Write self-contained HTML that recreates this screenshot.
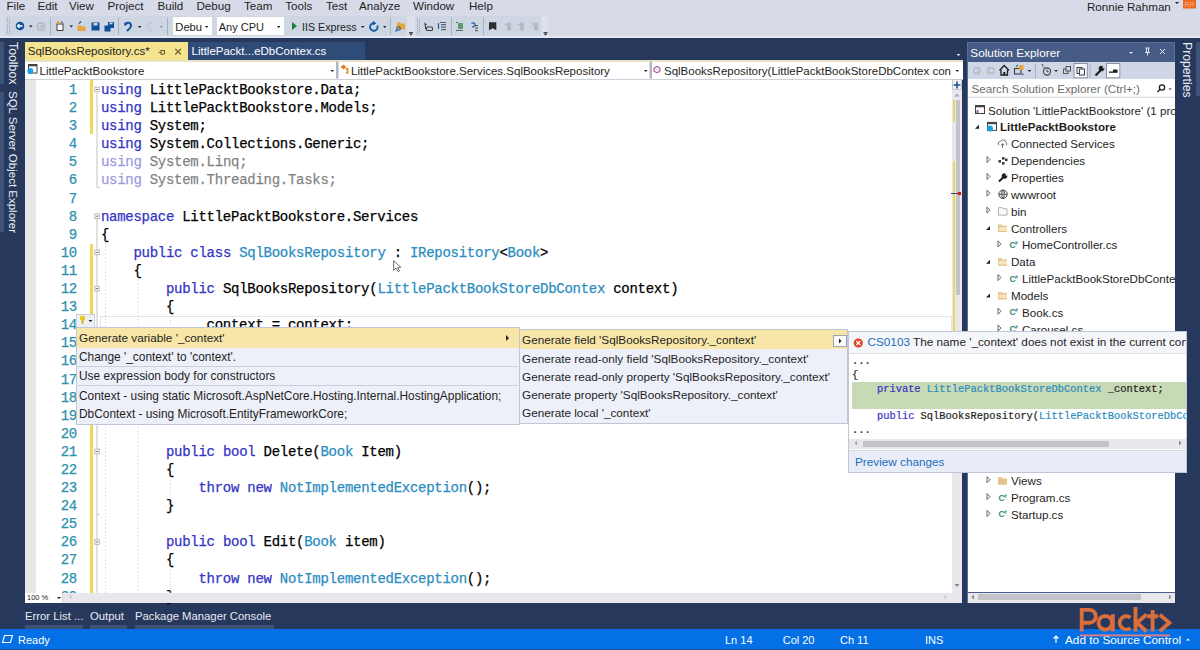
<!DOCTYPE html>
<html><head><meta charset="utf-8">
<style>
*{margin:0;padding:0;box-sizing:border-box}
html,body{width:1200px;height:650px;overflow:hidden}
body{position:relative;background:#26385c;font-family:"Liberation Sans",sans-serif;font-size:11.5px;color:#1e1e1e}
.a{position:absolute}
.t{position:absolute;white-space:pre;line-height:1}
#menubar{left:0;top:0;width:1200px;height:37.7px;background:#d6dbe7}
#toolbar{left:0;top:36.2px;width:1200px;height:1.5px;background:#e4e7ef}
.mi{position:absolute;top:-1px;font-size:11.6px;color:#1e1e1e;line-height:14px}
.code{position:absolute;left:100.9px;top:81px;font-family:"Liberation Mono",monospace;font-size:14px;letter-spacing:-0.27px;line-height:18.1px;white-space:pre;color:#000}
.ln{position:absolute;left:50px;width:27px;top:81px;font-family:"Liberation Mono",monospace;font-size:14px;letter-spacing:-0.22px;line-height:18.1px;white-space:pre;color:#2b91af;text-align:right}
.code,.ln{-webkit-text-stroke:0.25px currentColor}
.k{color:#3434c4}
.ty{color:#2a8cc0}
.g{opacity:.5}
</style></head><body>
<div id="menubar" class="a"></div>
<div id="toolbar" class="a"></div>

<!-- toolbars -->
<div class="a" style="left:5px;top:15.6px;width:402px;height:20.6px;background:#ced5e3"></div>
<div class="a" style="left:407px;top:15.6px;width:8px;height:20.6px;background:#dde1eb"></div>
<div class="a" style="left:415px;top:15.6px;width:126px;height:20.6px;background:#ced5e3"></div>
<div class="a" style="left:541px;top:15.6px;width:7px;height:20.6px;background:#dde1eb"></div>
<svg class="a" style="left:0;top:0" width="560" height="38" viewBox="0 0 560 38">
 <g fill="#9aa3b5">
  <rect x="7" y="18" width="1" height="1"/><rect x="9" y="19" width="1" height="1"/><rect x="7" y="20" width="1" height="1"/><rect x="9" y="21" width="1" height="1"/><rect x="7" y="22" width="1" height="1"/><rect x="9" y="23" width="1" height="1"/><rect x="7" y="24" width="1" height="1"/><rect x="9" y="25" width="1" height="1"/><rect x="7" y="26" width="1" height="1"/><rect x="9" y="27" width="1" height="1"/><rect x="7" y="28" width="1" height="1"/><rect x="9" y="29" width="1" height="1"/><rect x="7" y="30" width="1" height="1"/><rect x="9" y="31" width="1" height="1"/><rect x="7" y="32" width="1" height="1"/><rect x="9" y="33" width="1" height="1"/>
  <rect x="417" y="18" width="1" height="1"/><rect x="419" y="19" width="1" height="1"/><rect x="417" y="20" width="1" height="1"/><rect x="419" y="21" width="1" height="1"/><rect x="417" y="22" width="1" height="1"/><rect x="419" y="23" width="1" height="1"/><rect x="417" y="24" width="1" height="1"/><rect x="419" y="25" width="1" height="1"/><rect x="417" y="26" width="1" height="1"/><rect x="419" y="27" width="1" height="1"/><rect x="417" y="28" width="1" height="1"/><rect x="419" y="29" width="1" height="1"/><rect x="417" y="30" width="1" height="1"/><rect x="419" y="31" width="1" height="1"/><rect x="417" y="32" width="1" height="1"/><rect x="419" y="33" width="1" height="1"/>
 </g>
 <!-- separators -->
 <g fill="#a9b0c0">
  <rect x="50" y="17.5" width="1" height="17.5"/><rect x="118" y="17.5" width="1" height="17.5"/><rect x="167" y="17.5" width="1" height="17.5"/><rect x="390" y="17.5" width="1" height="17.5"/><rect x="451" y="17.5" width="1" height="17.5"/><rect x="483" y="17.5" width="1" height="17.5"/>
 </g>
 <!-- back/forward -->
 <circle cx="20" cy="26" r="4.3" fill="#0e4f9a"/><path d="M17.5 26h5M19.5 24l-2 2 2 2" stroke="#fff" stroke-width="1.3" fill="none"/>
 <circle cx="41" cy="26.5" r="3.7" fill="none" stroke="#b3b9c4" stroke-width="1.7"/><path d="M39 26.5h3.5M41 24.8l1.7 1.7-1.7 1.7" stroke="#b3b9c4" stroke-width="1.1" fill="none"/>
 <g fill="#1e1e1e"><path d="M29 25.5h3.5l-1.75 2z"/><path d="M69.5 25.5h3.5l-1.75 2z"/><path d="M138 26h3.5l-1.75 2z"/><path d="M361 26h3.5l-1.75 2z"/><path d="M383 26h3.5l-1.75 2z"/></g>
 <g fill="#8f97a6"><path d="M159.5 26h3.5l-1.75 2z"/></g>
 <!-- new project -->
 <rect x="57" y="24" width="6" height="6.5" fill="#f6f6f6" stroke="#424242" stroke-width="1"/><circle cx="58" cy="22.5" r="1.6" fill="#e8a33b"/><path d="M61 21.5l2 1.5" stroke="#424242"/>
 <!-- open -->
 <path d="M77.5 25.5h3l1 1h4v4.5h-8z" fill="#e8a33b"/><path d="M79 23.5l2-2" stroke="#1e5fa8" stroke-width="1.5"/>
 <!-- save -->
 <path d="M91.5 22.5h8v8h-8z" fill="#0e4f9a"/><rect x="93.5" y="23" width="4" height="2.5" fill="#d1d7e5"/>
 <path d="M104.5 25.5h6v6h-6z" fill="#0e4f9a"/><path d="M108 22h6v6h-6z" fill="#0e4f9a"/><rect x="109.5" y="22.5" width="3" height="1.8" fill="#d1d7e5"/>
 <!-- undo redo -->
 <path d="M125.5 23.5c2-1.5 5-1 5.5 1.5 0.5 2.5-2.5 4.5-4 6" stroke="#0e4f9a" stroke-width="2" fill="none"/><path d="M124 22.5l0.5 3.5 3-1.5z" fill="#0e4f9a"/>
 <path d="M153 23.5c-2-1.5-5-1-5.5 1.5-0.5 2.5 2.5 4.5 4 6" stroke="#bfc4cf" stroke-width="1.4" fill="none"/>
 <!-- play -->
 <path d="M292 22l5 4-5 4z" fill="#1a7f37"/>
 <!-- refresh -->
 <path d="M377.3 25.5A3.8 3.8 0 1 1 373.3 23.2" stroke="#0e5aa8" stroke-width="1.8" fill="none"/><path d="M372.8 20.8l3.6 2.4-3.6 2.4z" fill="#0e5aa8"/>
 <!-- find in files -->
 <path d="M397 22.5h3l1 1h4v6h-8z" fill="#e8a33b"/><circle cx="398.5" cy="28.5" r="1.8" fill="none" stroke="#1e5fa8" stroke-width="1.1"/><path d="M397 30l-1.5 1.5" stroke="#1e5fa8" stroke-width="1.2"/>
 <!-- overflow carets -->
 <g fill="#1e1e1e"><rect x="409" y="32" width="4" height="0.8"/><path d="M409 33.5h4l-2 2z"/><rect x="543.5" y="32" width="4" height="0.8"/><path d="M543.5 33.5h4l-2 2z"/></g>
 <!-- debug icons -->
 <path d="M424.5 22l2.5 2.5-2.5 1.5z" fill="#1e5fa8"/><rect x="426.5" y="27" width="6" height="3.5" rx="1" fill="none" stroke="#424242" stroke-width="1.1"/><path d="M425.5 24.5v4.5h1" stroke="#424242" fill="none"/>
 <g fill="#5a5f6a"><rect x="440" y="22" width="6" height="1"/><rect x="441" y="24" width="5" height="1.2"/><rect x="441" y="26.5" width="5" height="1.2"/><rect x="441" y="29" width="5" height="1.2"/></g><path d="M438.5 23v6" stroke="#1e5fa8" stroke-width="1.2"/>
 <rect x="458" y="23" width="5" height="6" fill="#5aa06a"/><g fill="#5a5f6a"><rect x="456" y="30" width="7" height="1"/><rect x="456" y="22" width="2" height="1"/></g>
 <path d="M471.5 23.5c1-1 3.5-1 3.5 1s-2 1.5-2.5 3" stroke="#1e5fa8" stroke-width="1.4" fill="none"/><g fill="#5a5f6a"><rect x="475" y="25" width="3" height="1.2"/><rect x="475" y="27.5" width="3" height="1.2"/><rect x="475" y="30" width="3" height="1.2"/></g>
 <!-- bookmark -->
 <path d="M489 22.3h7.3v8l-3.65-2-3.65 2z" fill="#2d2d30"/>
 <g fill="#b3b9c5"><path d="M504 24.5l2-1.5v3z"/><rect x="505" y="24" width="2" height="1"/><rect x="507" y="22.5" width="4" height="8"/>
 <path d="M517 24.5l2-1.5v3z"/><rect x="518" y="24" width="2" height="1"/><rect x="520" y="22.5" width="4" height="8"/>
 <path d="M531 22.5l2.5 2.5-2.5 2.5" stroke="#b3b9c5" fill="none"/><rect x="534" y="22.5" width="4" height="8"/></g>
</svg>
<!-- combos -->
<div class="a" style="left:172.7px;top:17.3px;width:39.3px;height:18px;background:#fff"></div>
<div class="a" style="left:216.7px;top:17.3px;width:67.6px;height:18px;background:#fff"></div>
<div class="t" style="left:175.3px;top:21px;font-size:11.2px;line-height:12px">Debu</div>
<div class="t" style="left:218.7px;top:21px;font-size:11px;line-height:12px">Any CPU</div>
<div class="t" style="left:302px;top:21px;font-size:10.7px;line-height:12px">IIS Express</div>
<svg class="a" style="left:0;top:0" width="300" height="38"><g fill="#1e1e1e"><path d="M205 26h3.5l-1.75 2z"/><path d="M277 26h3.5l-1.75 2z"/></g></svg>
<!-- user -->
<div class="t" style="left:1087px;top:1px;font-size:11.6px;line-height:12px">Ronnie Rahman</div>
<svg class="a" style="left:1170px;top:0" width="30" height="12"><path d="M5 2h4l-2 2z" fill="#1e1e1e"/><rect x="13" y="0" width="13" height="8.5" fill="#f0641e"/><text x="14.5" y="7" font-size="7" fill="#fbb58e" font-family="Liberation Sans">RR</text></svg>

<div class="mi" style="left:6.5px">File</div>
<div class="mi" style="left:37.5px">Edit</div>
<div class="mi" style="left:69px">View</div>
<div class="mi" style="left:107.5px">Project</div>
<div class="mi" style="left:157.5px">Build</div>
<div class="mi" style="left:196.5px">Debug</div>
<div class="mi" style="left:244px">Team</div>
<div class="mi" style="left:285.3px">Tools</div>
<div class="mi" style="left:326px">Test</div>
<div class="mi" style="left:359px">Analyze</div>
<div class="mi" style="left:413px">Window</div>
<div class="mi" style="left:469px">Help</div>

<!-- editor -->
<div class="a" style="left:25px;top:42px;width:163px;height:18.5px;background:#f4e38f"></div>
<div class="a" style="left:188px;top:42px;width:177px;height:18.5px;background:#2f4c79"></div>
<div class="a" style="left:25px;top:60.3px;width:938px;height:1.4px;background:#e9e4c8"></div>
<div class="a" style="left:25px;top:61.7px;width:938px;height:17px;background:#fff"></div>
<div class="a" style="left:25px;top:78.7px;width:938px;height:1.3px;background:#cdd1db"></div>
<div class="a" style="left:25px;top:80px;width:937px;height:512.5px;background:#fff"></div>
<div class="a" style="left:25px;top:80px;width:11px;height:512.5px;background:#e6e7e8"></div>

<div class="ln">1
2
3
4
5
6
7
8
9
10
11
12
13
14
15
16
17
18
19
20
21
22
23
24
25
26
27
28
29</div>
<div class="code"><span class="k">using</span> LittlePacktBookstore.Data;
<span class="k">using</span> LittlePacktBookstore.Models;
<span class="k">using</span> System;
<span class="k">using</span> System.Collections.Generic;
<span class="g"><span class="k">using</span> System.Linq;</span>
<span class="g"><span class="k">using</span> System.Threading.Tasks;</span>

<span class="k">namespace</span> LittlePacktBookstore.Services
{
    <span class="k">public</span> <span class="k">class</span> <span class="ty">SqlBooksRepository</span> : <span class="ty">IRepository</span>&lt;<span class="ty">Book</span>&gt;
    {
        <span class="k">public</span> SqlBooksRepository(<span class="ty">LittlePacktBookStoreDbContex</span> context)
        {
            _context = context;






        <span class="k">public</span> <span class="k">bool</span> Delete(<span class="ty">Book</span> Item)
        {
            <span class="k">throw</span> <span class="k">new</span> <span class="ty">NotImplementedException</span>();
        }

        <span class="k">public</span> <span class="k">bool</span> Edit(<span class="ty">Book</span> item)
        {
            <span class="k">throw</span> <span class="k">new</span> <span class="ty">NotImplementedException</span>();
        }</div>



<!-- editor decorations -->
<div class="a" style="left:90px;top:80px;width:2.8px;height:54px;background:#eed75b"></div>
<div class="a" style="left:90px;top:243.5px;width:2.8px;height:349px;background:#eed75b"></div>
<svg class="a" style="left:90px;top:80px" width="90" height="513">
 <g fill="none" stroke="#c4c4c4" stroke-width="1">
  <path d="M97 12.3v95.2h3" transform="translate(-90,0)"/>
  <path d="M97 138.8v374M97 434.5h2.5" transform="translate(-90,0)"/>
 </g>
 <g transform="translate(-90,0)">
  <rect x="94.7" y="87.2" width="4.6" height="4.6" fill="#fff" stroke="#b8b8b8" transform="translate(0,-80)"/><rect x="95.8" y="89" width="2.4" height="1" fill="#6b6b6b" transform="translate(0,-80)"/>
  <rect x="94.7" y="87.2" width="4.6" height="4.6" fill="#fff" stroke="#b8b8b8" transform="translate(0,46.7)"/><rect x="95.8" y="89" width="2.4" height="1" fill="#6b6b6b" transform="translate(0,46.7)"/>
  <rect x="94.7" y="87.2" width="4.6" height="4.6" fill="#fff" stroke="#b8b8b8" transform="translate(0,82.9)"/><rect x="95.8" y="89" width="2.4" height="1" fill="#6b6b6b" transform="translate(0,82.9)"/>
  <rect x="94.7" y="87.2" width="4.6" height="4.6" fill="#fff" stroke="#b8b8b8" transform="translate(0,119.1)"/><rect x="95.8" y="89" width="2.4" height="1" fill="#6b6b6b" transform="translate(0,119.1)"/>
  <rect x="94.7" y="87.2" width="4.6" height="4.6" fill="#fff" stroke="#b8b8b8" transform="translate(0,282)"/><rect x="95.8" y="89" width="2.4" height="1" fill="#6b6b6b" transform="translate(0,282)"/>
  <rect x="94.7" y="87.2" width="4.6" height="4.6" fill="#fff" stroke="#b8b8b8" transform="translate(0,372.5)"/><rect x="95.8" y="89" width="2.4" height="1" fill="#6b6b6b" transform="translate(0,372.5)"/>
 </g>
 <g stroke="#c8c8c8" stroke-width="1" stroke-dasharray="1 2.6" fill="none">
  <path d="M15.5 163v350"/>
  <path d="M48 199.5v313"/>
  <path d="M80.5 236.5v100"/><path d="M80.5 400v17.5"/><path d="M80.5 490v23"/>
 </g>
</svg>
<svg class="a" style="left:0;top:0" width="420" height="280"><path d="M393.7 260.7V270.3L396 268.1L398 271.6L399.5 270.9L397.6 267.5L400.8 267.3Z" fill="#fff" stroke="#5a5a5a" stroke-width="0.9"/></svg>
<!-- current line box -->
<div class="a" style="left:100px;top:315.5px;width:852px;height:18px;border:1px solid #e3e3e3;border-bottom:none"></div>
<!-- lightbulb -->
<div class="a" style="left:76.3px;top:313.7px;width:18.7px;height:13.5px;background:#eef0f6;border:1px solid #c9cfdc;border-bottom:none"></div>
<svg class="a" style="left:76px;top:313px" width="20" height="15"><circle cx="6.5" cy="5" r="2.6" fill="#f0c419"/><rect x="5.6" y="7" width="1.8" height="4" fill="#e3b100"/><path d="M12.5 7h4l-2 2z" fill="#1e1e1e"/></svg>
<!-- vertical scrollbar -->
<div class="a" style="left:952px;top:80px;width:10px;height:512.5px;background:#e8e8ec"></div>
<div class="a" style="left:952px;top:79.4px;width:10px;height:10.6px;background:#f2f2f5;border:1px solid #c6c9d2"></div>
<svg class="a" style="left:952px;top:79px" width="11" height="520"><path d="M5 2.5v7M1.5 6h7" stroke="#1e4f8e" stroke-width="1.6"/><path d="M2.5 17.5h5l-2.5-3z" fill="#9ea3ad"/><path d="M2.5 505h5l-2.5 3z" fill="#86898f"/></svg>
<div class="a" style="left:955.5px;top:99.8px;width:4.8px;height:195px;background:#c2c3c9"></div>
<div class="a" style="left:952.6px;top:99.8px;width:2.8px;height:22.6px;background:#eed75b"></div>
<div class="a" style="left:952.6px;top:161.2px;width:2.8px;height:300px;background:#eed75b"></div>
<div class="a" style="left:951px;top:193px;width:7px;height:1.2px;background:#2a3fa0"></div>
<div class="a" style="left:957.5px;top:191.8px;width:3.5px;height:3.5px;background:#e51400"></div>
<!-- nav bar arrows and icons -->
<svg class="a" style="left:0;top:0" width="965" height="80">
 <g fill="#1e1e1e"><path d="M330.5 70h3.5l-1.75 2z"/><path d="M644 70h3.5l-1.75 2z"/><path d="M955.5 70h3.5l-1.75 2z"/></g>
 <g fill="#b0b8c8"><rect x="336" y="61.5" width="2.5" height="17"/><rect x="649.5" y="61.5" width="2.5" height="17"/></g>
 <rect x="28.5" y="64.5" width="8.5" height="8.5" fill="#fff" stroke="#424242" stroke-width="1"/><rect x="28.5" y="64.5" width="8.5" height="1.8" fill="#424242"/><circle cx="30.3" cy="71" r="3" fill="#1ba1e2"/>
 <g fill="#e0861a"><path d="M343.5 64.5l3 2.5-3 2.5-3-2.5z"/><rect x="346" y="68" width="2.2" height="2.2"/><rect x="346" y="71.5" width="2.2" height="2.2"/><rect x="347.5" y="69.5" width="1" height="3"/></g>
 <path d="M657 66.3l3 1.6v3.4l-3 1.6-3-1.6v-3.4z" fill="#f3e6f3" stroke="#a24a9b" stroke-width="1"/>
</svg>


<!-- dropdown caret in tab well -->
<svg class="a" style="left:952px;top:50px" width="12" height="10"><path d="M4.5 4h4l-2 2z" fill="#e6e9f0"/></svg>
<!-- bottom tool tabs -->
<div class="t" style="left:25px;top:610px;font-size:11.3px;line-height:12px;color:#e6e9f0">Error List ...</div>
<div class="t" style="left:90px;top:610px;font-size:11.3px;line-height:12px;color:#e6e9f0">Output</div>
<div class="t" style="left:135px;top:610px;font-size:11.3px;line-height:12px;color:#e6e9f0">Package Manager Console</div>
<div class="a" style="left:25px;top:625px;width:57.5px;height:3.5px;background:#3d5277"></div>
<div class="a" style="left:90px;top:625px;width:37px;height:3.5px;background:#3d5277"></div>
<div class="a" style="left:135px;top:625px;width:139px;height:3.5px;background:#3d5277"></div>

<!-- left vertical tabs -->
<div class="a" style="left:0;top:42px;width:4px;height:42px;background:#3d5277"></div>
<div class="a" style="left:0;top:92px;width:4px;height:140px;background:#3d5277"></div>
<div class="t" style="left:7px;top:42px;transform-origin:0 0;transform:translate(11px,0) rotate(90deg);color:#e8ecf4;font-size:12.3px;line-height:11px">Toolbox</div>
<div class="t" style="left:7px;top:91px;transform-origin:0 0;transform:translate(11px,0) rotate(90deg);color:#e8ecf4;font-size:11.5px;line-height:11px">SQL Server Object Explorer</div>
<!-- right vertical tab -->
<div class="a" style="left:1196px;top:42px;width:4px;height:54px;background:#3d5277"></div>
<div class="t" style="left:1181px;top:42px;transform-origin:0 0;transform:translate(11px,0) rotate(90deg);color:#e8ecf4;font-size:12.2px;line-height:11px">Properties</div>

<!-- tabs text -->
<div class="t" style="left:27.8px;top:45px;font-size:11.5px;line-height:12px;color:#1e1e1e">SqlBooksRepository.cs*</div>
<div class="t" style="left:191.5px;top:45px;font-size:11.5px;line-height:12px;color:#fff">LittlePackt...eDbContex.cs</div>
<svg class="a" style="left:0;top:0" width="200" height="62"><path d="M175.3 48.8l5.6 5.6M180.9 48.8l-5.6 5.6" stroke="#5e5427" stroke-width="1.15"/><path d="M158.5 52.3h2.5M161 50v4.6M161 50.5h3.5v3.6h-3.5" stroke="#5e5427" stroke-width="1" fill="none"/></svg>
<!-- nav bar -->
<div class="t" style="left:39.5px;top:65px;font-size:11.5px;line-height:12px">LittlePacktBookstore</div>
<div class="t" style="left:351px;top:65px;font-size:11.5px;line-height:12px">LittlePacktBookstore.Services.SqlBooksRepository</div>
<div class="t" style="left:664px;top:65px;font-size:11.5px;line-height:12px">SqlBooksRepository(LittlePacktBookStoreDbContex con</div>


<!-- Solution Explorer -->
<div class="a" style="left:966.6px;top:42.3px;width:208.6px;height:560.7px;background:#465b85;border:1.2px solid #5a6d94"></div>
<div class="t" style="left:970.3px;top:47px;font-size:11.8px;line-height:12px;color:#fff">Solution Explorer</div>
<svg class="a" style="left:1120px;top:42px" width="55" height="20"><path d="M9 10h4l-2 2z" fill="#e6e9f0"/><g stroke="#e6e9f0" stroke-width="1" fill="none"><path d="M26.5 6v4.5M28.5 6v4.5M25 10.5h5M27.5 10.5v3M25.5 6h4"/><path d="M40 7l5 5M45 7l-5 5"/></g></svg>
<div class="a" style="left:968px;top:61.6px;width:207px;height:17.7px;background:#cfd6e5"></div>
<div class="a" style="left:968px;top:79.3px;width:207px;height:18.4px;background:#fff"></div>
<div class="t" style="left:971.4px;top:83px;font-size:11.7px;line-height:12px;color:#6d6d6d">Search Solution Explorer (Ctrl+;)</div>
<svg class="a" style="left:0;top:0" width="1200" height="100">
 <circle cx="977" cy="70.7" r="3.9" fill="#b9bfca"/><path d="M975 70.7h4M976.5 69l-1.7 1.7 1.7 1.7" stroke="#e4e8ef" stroke-width="1" fill="none"/>
 <circle cx="990.7" cy="70.7" r="3.9" fill="#b9bfca"/><path d="M988.7 70.7h4M991 69l1.7 1.7-1.7 1.7" stroke="#e4e8ef" stroke-width="1" fill="none"/>
 <path d="M999.5 70.5l4.75-5 4.75 5" stroke="#1e1e1e" stroke-width="1.3" fill="none"/><path d="M1001 70v5h6.5v-5" stroke="#1e1e1e" stroke-width="1.3" fill="none"/><rect x="1003.3" y="72" width="2" height="3" fill="#1e1e1e"/>
 <rect x="1014.5" y="68.5" width="6.5" height="5.5" fill="none" stroke="#424242" stroke-width="1.1"/><rect x="1019" y="65" width="4.5" height="5" fill="#e8a33b"/><path d="M1016 66.5l2-1.5M1022 75l1.5-1.5" stroke="#1e6fbd" stroke-width="1.2"/>
 <path d="M1027.7 70h3.5l-1.75 2z" fill="#1e1e1e"/>
 <rect x="1035" y="64" width="1" height="14" fill="#a9b0c0"/>
 <path d="M1041.5 64.5l2 0 -1 1.5z" fill="#1e1e1e"/><circle cx="1047" cy="71.5" r="3.6" fill="none" stroke="#424242" stroke-width="1.1"/><path d="M1047 69.5v2.3h1.8M1043 66.5l1.5 1.5" stroke="#424242" stroke-width="1" fill="none"/>
 <path d="M1054.3 70h3.5l-1.75 2z" fill="#1e1e1e"/>
 <rect x="1063.5" y="69" width="4.5" height="4.5" fill="#cfd6e5" stroke="#555" stroke-width="1"/><rect x="1066" y="66.5" width="4.5" height="4.5" fill="#cfd6e5" stroke="#555" stroke-width="1"/>
 <rect x="1074" y="63.5" width="13.3" height="14.3" fill="#f5f7fb" stroke="#8a93a5" stroke-width="1"/><rect x="1077" y="67.5" width="5" height="6" fill="none" stroke="#424242" stroke-width="1"/><rect x="1079.5" y="69" width="5" height="6" fill="#f5f7fb" stroke="#424242" stroke-width="1"/>
 <rect x="1089.5" y="64" width="1" height="14" fill="#a9b0c0"/>
 <path d="M1095.5 75.5l5-5" stroke="#1e1e1e" stroke-width="2.2"/><circle cx="1101.5" cy="68.5" r="2.8" fill="#1e1e1e"/><path d="M1102 65l3 3-2 0.5z" fill="#cfd6e5"/>
 <rect x="1106.5" y="63.5" width="13.3" height="14.3" fill="#fff" stroke="#8a93a5" stroke-width="1"/><rect x="1109" y="71.5" width="8.5" height="1.3" fill="#1e1e1e"/><rect x="1113" y="69.5" width="4.5" height="2.5" fill="#1e1e1e"/>
 <circle cx="1162" cy="87.5" r="2.6" fill="none" stroke="#1e1e1e" stroke-width="1.3"/><path d="M1160 89.5l-2.5 2.5" stroke="#1e1e1e" stroke-width="1.5"/><path d="M1168.5 88.5h3l-1.5 1.5z" fill="#1e1e1e"/><rect x="968" y="96.7" width="207" height="1" fill="#cfd3dd"/>
</svg>
<div class="a" style="left:968px;top:97.7px;width:207px;height:494.3px;background:#fff"></div>
<div class="a" style="left:968px;top:592.5px;width:207px;height:10.5px;background:#e8e8ec"></div>
<div class="a" style="left:977.5px;top:594px;width:163.5px;height:6px;background:#c2c3c9"></div>
<svg class="a" style="left:968px;top:590px" width="207" height="14"><path d="M6 4.5v5l-2.5-2.5z" fill="#86898f"/><path d="M201 4.5v5l2.5-2.5z" fill="#86898f"/></svg>
<div class="a" style="left:970px;top:97.7px;width:205px;height:494px;overflow:hidden"><div class="a" style="left:-970px;top:-97.7px;width:1200px;height:650px"><div class="t" style="left:988px;top:102.60px;font-size:11.6px;line-height:16.85px;color:#1e1e1e">Solution 'LittlePacktBookstore' (1 project)</div>
<div class="t" style="left:1000px;top:119.45px;font-size:11.6px;line-height:16.85px;font-weight:bold;color:#1e1e1e">LittlePacktBookstore</div>
<div class="t" style="left:1011px;top:136.30px;font-size:11.6px;line-height:16.85px;color:#1e1e1e">Connected Services</div>
<div class="t" style="left:1011px;top:153.15px;font-size:11.6px;line-height:16.85px;color:#1e1e1e">Dependencies</div>
<div class="t" style="left:1011px;top:170.00px;font-size:11.6px;line-height:16.85px;color:#1e1e1e">Properties</div>
<div class="t" style="left:1011px;top:186.85px;font-size:11.6px;line-height:16.85px;color:#1e1e1e">wwwroot</div>
<div class="t" style="left:1011px;top:203.70px;font-size:11.6px;line-height:16.85px;color:#1e1e1e">bin</div>
<div class="t" style="left:1011px;top:220.55px;font-size:11.6px;line-height:16.85px;color:#1e1e1e">Controllers</div>
<div class="t" style="left:1022px;top:237.40px;font-size:11.6px;line-height:16.85px;color:#1e1e1e">HomeController.cs</div>
<div class="t" style="left:1011px;top:254.25px;font-size:11.6px;line-height:16.85px;color:#1e1e1e">Data</div>
<div class="t" style="left:1022px;top:271.10px;font-size:11.6px;line-height:16.85px;color:#1e1e1e">LittlePacktBookStoreDbContext.cs</div>
<div class="t" style="left:1011px;top:287.95px;font-size:11.6px;line-height:16.85px;color:#1e1e1e">Models</div>
<div class="t" style="left:1022px;top:304.80px;font-size:11.6px;line-height:16.85px;color:#1e1e1e">Book.cs</div>
<div class="t" style="left:1022px;top:321.65px;font-size:11.6px;line-height:16.85px;color:#1e1e1e">Carousel.cs</div>
<div class="t" style="left:1022px;top:338.50px;font-size:11.6px;line-height:16.85px;color:#1e1e1e">IRepository.cs</div>
<div class="t" style="left:1011px;top:473.30px;font-size:11.6px;line-height:16.85px;color:#1e1e1e">Views</div>
<div class="t" style="left:1011px;top:490.15px;font-size:11.6px;line-height:16.85px;color:#1e1e1e">Program.cs</div>
<div class="t" style="left:1011px;top:507.00px;font-size:11.6px;line-height:16.85px;color:#1e1e1e">Startup.cs</div><svg class="a" style="left:0;top:0" width="1200" height="650" overflow="visible"><rect x="975.5" y="105.52" width="9" height="8" fill="#fff" stroke="#424242"/><rect x="975.5" y="105.52" width="9" height="1.8" fill="#424242"/><path d="M976.5 110.52l2 2M978.5 110.52l-2 2" stroke="#9b4f96" stroke-width="1.2"/><path d="M979.0 124.87v4h-4z" fill="#1e1e1e"/><rect x="987.5" y="122.37" width="9" height="8" fill="#fff" stroke="#424242"/><rect x="987.5" y="122.37" width="9" height="1.8" fill="#424242"/><circle cx="990" cy="128.38" r="3" fill="#1ba1e2"/><path d="M999 145.23a2.2 2.2 0 0 1 1.5-3.8a3 3 0 0 1 5.5 0.8a1.8 1.8 0 0 1 0 3" fill="none" stroke="#6a6a6a" stroke-width="1"/><path d="M1002.5 147.73v-4M1001 145.23l1.5-1.5 1.5 1.5" stroke="#6a6a6a" fill="none"/><path d="M987.0 156.58l3 3-3 3z" fill="none" stroke="#555" stroke-width="0.9"/><g fill="#333"><rect x="998.5" y="160.08" width="2.5" height="2.5"/><rect x="1002" y="157.08" width="2.5" height="2.5"/><rect x="1002" y="162.08" width="2.5" height="2.5"/><rect x="1005" y="158.58" width="2.5" height="2.5"/></g><path d="M987.0 173.43l3 3-3 3z" fill="none" stroke="#555" stroke-width="0.9"/><path d="M999 181.43l4.5-4.5" stroke="#1e1e1e" stroke-width="2"/><circle cx="1004.5" cy="175.93" r="2.8" fill="#1e1e1e"/><path d="M1005 172.62l2.5 2.5-1.5 1z" fill="#fff"/><path d="M987.0 190.28l3 3-3 3z" fill="none" stroke="#555" stroke-width="0.9"/><circle cx="1003" cy="194.28" r="4.2" fill="none" stroke="#424242" stroke-width="1"/><path d="M998.8 194.28h8.4M1003 190.08v8.4M1003 190.08c-2.5 2.5-2.5 5.9 0 8.4M1003 190.08c2.5 2.5 2.5 5.9 0 8.4" fill="none" stroke="#424242" stroke-width="0.8"/><path d="M987.0 207.12l3 3-3 3z" fill="none" stroke="#555" stroke-width="0.9"/><path d="M998.5 207.62h3.5l1 1.2h4v6.3h-8.5z" fill="#fafafa" stroke="#b0b0b0" stroke-width="1"/><path d="M990.0 225.98v4h-4z" fill="#1e1e1e"/><path d="M998 224.48h3.5l1 1.2h4.5v6.3h-9z" fill="#e3c48f"/><path d="M999 226.98h8v3.8h-8z" fill="#f6e4c0"/><path d="M998.0 240.83l3 3-3 3z" fill="none" stroke="#555" stroke-width="0.9"/><text x="1009.5" y="247.83" font-size="8.5" font-weight="bold" fill="#368a75" font-family="Liberation Sans">C</text><text x="1015" y="244.83" font-size="5" font-weight="bold" fill="#368a75" font-family="Liberation Sans">#</text><path d="M990.0 259.68v4h-4z" fill="#1e1e1e"/><path d="M998 258.18h3.5l1 1.2h4.5v6.3h-9z" fill="#e3c48f"/><path d="M999 260.68h8v3.8h-8z" fill="#f6e4c0"/><path d="M998.0 274.53l3 3-3 3z" fill="none" stroke="#555" stroke-width="0.9"/><text x="1009.5" y="281.53" font-size="8.5" font-weight="bold" fill="#368a75" font-family="Liberation Sans">C</text><text x="1015" y="278.53" font-size="5" font-weight="bold" fill="#368a75" font-family="Liberation Sans">#</text><path d="M990.0 293.38v4h-4z" fill="#1e1e1e"/><path d="M998 291.88h3.5l1 1.2h4.5v6.3h-9z" fill="#e3c48f"/><path d="M999 294.38h8v3.8h-8z" fill="#f6e4c0"/><path d="M998.0 308.23l3 3-3 3z" fill="none" stroke="#555" stroke-width="0.9"/><text x="1009.5" y="315.23" font-size="8.5" font-weight="bold" fill="#368a75" font-family="Liberation Sans">C</text><text x="1015" y="312.23" font-size="5" font-weight="bold" fill="#368a75" font-family="Liberation Sans">#</text><path d="M998.0 325.07l3 3-3 3z" fill="none" stroke="#555" stroke-width="0.9"/><text x="1009.5" y="332.07" font-size="8.5" font-weight="bold" fill="#368a75" font-family="Liberation Sans">C</text><text x="1015" y="329.07" font-size="5" font-weight="bold" fill="#368a75" font-family="Liberation Sans">#</text><path d="M998.0 341.93l3 3-3 3z" fill="none" stroke="#555" stroke-width="0.9"/><text x="1009.5" y="348.93" font-size="8.5" font-weight="bold" fill="#368a75" font-family="Liberation Sans">C</text><text x="1015" y="345.93" font-size="5" font-weight="bold" fill="#368a75" font-family="Liberation Sans">#</text><path d="M987.0 476.73l3 3-3 3z" fill="none" stroke="#555" stroke-width="0.9"/><path d="M998 477.23h3.5l1 1.2h4.5v6.3h-9z" fill="#e3c48f"/><path d="M987.0 493.57l3 3-3 3z" fill="none" stroke="#555" stroke-width="0.9"/><text x="998.5" y="500.57" font-size="8.5" font-weight="bold" fill="#368a75" font-family="Liberation Sans">C</text><text x="1004" y="497.57" font-size="5" font-weight="bold" fill="#368a75" font-family="Liberation Sans">#</text><path d="M987.0 510.42l3 3-3 3z" fill="none" stroke="#555" stroke-width="0.9"/><text x="998.5" y="517.42" font-size="8.5" font-weight="bold" fill="#368a75" font-family="Liberation Sans">C</text><text x="1004" y="514.42" font-size="5" font-weight="bold" fill="#368a75" font-family="Liberation Sans">#</text></svg></div></div>

<!-- bottom editor scrollbar -->
<div class="a" style="left:25px;top:592.5px;width:937px;height:10.5px;background:#e8e8ec"></div>
<div class="a" style="left:25px;top:592.5px;width:37.5px;height:10.5px;background:#fff;border-right:1px solid #d5d7de"></div>
<div class="t" style="left:27px;top:594px;font-size:7.5px;line-height:8px;color:#1e1e1e">100 %</div>
<svg class="a" style="left:25px;top:592px" width="930" height="11"><path d="M32 5h4l-2 2z" fill="#1e1e1e"/><path d="M46.5 2.5v5l-2.5-2.5z" fill="#c5c7cd"/><path d="M919.5 2.5v5l2.5-2.5z" fill="#c5c7cd"/></svg>

<!-- status -->
<div class="a" style="left:0;top:628.5px;width:1200px;height:21.5px;background:#0370e6"></div>
<div class="a" style="left:0;top:648.7px;width:1200px;height:1.3px;background:#1d4f8a"></div>

<svg class="a" style="left:0;top:629px" width="20" height="21"><path d="M4.5 6.5h8l-2 7h-8z" fill="none" stroke="#fff" stroke-width="1.1"/></svg>
<div class="t" style="left:18px;top:633.5px;font-size:11px;line-height:12px;color:#fff">Ready</div>
<div class="t" style="left:725px;top:633.5px;font-size:11px;line-height:12px;color:#fff">Ln 14</div>
<div class="t" style="left:782.7px;top:633.5px;font-size:11px;line-height:12px;color:#fff">Col 20</div>
<div class="t" style="left:840px;top:633.5px;font-size:11px;line-height:12px;color:#fff">Ch 11</div>
<div class="t" style="left:925px;top:633.5px;font-size:11px;line-height:12px;color:#fff">INS</div>
<div class="t" style="left:1065px;top:633.5px;font-size:11.8px;line-height:12px;color:#fff">Add to Source Control</div>
<svg class="a" style="left:1050px;top:629px" width="150" height="21"><path d="M6 14V7M3.5 9.5L6 7l2.5 2.5" stroke="#fff" stroke-width="1.2" fill="none"/><path d="M136 11.5h4l-2-2z" fill="#fff"/></svg>
<!-- popup 1 -->
<div class="a" style="left:75.7px;top:327px;width:444px;height:97.5px;background:#edf0f9;border:1px solid #bfc6d6"></div>
<div class="a" style="left:76.7px;top:328px;width:442px;height:20px;background:#f7e6a8"></div>
<div class="a" style="left:78px;top:366px;width:440px;height:1px;background:#c9cfdc"></div>
<div class="a" style="left:78px;top:385px;width:440px;height:1px;background:#c9cfdc"></div>
<div class="t" style="left:79px;top:332px;font-size:11.75px;line-height:12px;color:#1e1e1e">Generate variable '_context'</div>
<div class="t" style="left:79px;top:351px;font-size:11.9px;line-height:12px;color:#1e1e1e">Change '_context' to 'context'.</div>
<div class="t" style="left:79px;top:370px;font-size:11.9px;line-height:12px;color:#1e1e1e">Use expression body for constructors</div>
<div class="t" style="left:79px;top:390px;font-size:11.9px;line-height:12px;color:#1e1e1e">Context - using static Microsoft.AspNetCore.Hosting.Internal.HostingApplication;</div>
<div class="t" style="left:79px;top:408px;font-size:11.9px;line-height:12px;color:#1e1e1e">DbContext - using Microsoft.EntityFrameworkCore;</div>
<svg class="a" style="left:500px;top:330px" width="20" height="20"><path d="M6 5v6l3-3z" fill="#1e1e1e"/></svg>
<!-- popup 2 -->
<div class="a" style="left:519px;top:329px;width:329px;height:95px;background:#edf0f9;border:1px solid #bfc6d6"></div>
<div class="a" style="left:520px;top:330px;width:327px;height:18.5px;background:#f7e6a8"></div>
<div class="a" style="left:833px;top:335px;width:14px;height:12px;background:#fbfbfd;border:1px solid #9aa3b5"></div>
<svg class="a" style="left:833px;top:335px" width="14" height="12"><path d="M6 3.5v5l2.5-2.5z" fill="#1e1e1e"/></svg>
<div class="t" style="left:522px;top:334px;font-size:11.75px;line-height:12px;color:#1e1e1e">Generate field 'SqlBooksRepository._context'</div>
<div class="t" style="left:522px;top:353px;font-size:11.75px;line-height:12px;color:#1e1e1e">Generate read-only field 'SqlBooksRepository._context'</div>
<div class="t" style="left:522px;top:371px;font-size:11.75px;line-height:12px;color:#1e1e1e">Generate read-only property 'SqlBooksRepository._context'</div>
<div class="t" style="left:522px;top:389px;font-size:11.75px;line-height:12px;color:#1e1e1e">Generate property 'SqlBooksRepository._context'</div>
<div class="t" style="left:522px;top:407px;font-size:11.75px;line-height:12px;color:#1e1e1e">Generate local '_context'</div>
<!-- popup 3 -->
<div class="a" style="left:848px;top:331px;width:339px;height:142px;background:#fff;border:1px solid #bfc6d6;overflow:hidden">
 <div class="a" style="left:0;top:0;width:339px;height:20.5px;background:#f5f6fa"></div>
 <div class="a" style="left:0;top:20.5px;width:339px;height:1px;background:#dfe2ea"></div>
 <svg class="a" style="left:3.5px;top:6px" width="12" height="12"><circle cx="5.3" cy="5" r="4.6" fill="#e5412a"/><path d="M3.3 3l4 4M7.3 3l-4 4" stroke="#fff" stroke-width="1.3"/></svg>
 <div class="t" style="left:18.5px;top:4px;font-size:11.75px;line-height:12px;color:#1e1e1e"><span style="color:#1c6ebd">CS0103</span> The name '_context' does not exist in the current context</div>
 <div class="a" style="left:3px;top:49.5px;width:335px;height:27.5px;background:#c7d9b5"></div>
 <div class="a" style="left:3px;top:23px;font-family:'Liberation Mono',monospace;font-size:10.4px;line-height:13.85px;white-space:pre;color:#1e1e1e;-webkit-text-stroke:0.2px currentColor">...
{
    <span class="k">private</span> <span class="ty">LittlePacktBookStoreDbContex</span> _context;

    <span class="k">public</span> SqlBooksRepository(<span class="ty">LittlePacktBookStoreDbContext</span> context)
...</div>
 <div class="a" style="left:0;top:106.5px;width:339px;height:10px;background:#e8e8ec"></div>
 <div class="a" style="left:14px;top:108.5px;width:246px;height:6px;background:#c2c3c9"></div>
 <svg class="a" style="left:0;top:106px" width="339" height="11"><path d="M8 2.5v5l-2.5-2.5z" fill="#9ea3ad"/><path d="M330 2.5v5l2.5-2.5z" fill="#86898f"/></svg>
 <div class="a" style="left:0;top:117.5px;width:339px;height:25px;background:#e9edf8;border-top:1px solid #d0d6e2"></div>
 <div class="t" style="left:6px;top:124px;font-size:11.75px;line-height:12px;color:#1c6ebd">Preview changes</div>
</div>

<!-- packt logo -->
<svg class="a" style="left:0;top:0;opacity:.92" width="1200" height="650">
 <g stroke="#ea7338" stroke-width="3.9" fill="none">
  <path d="M1081.7 631.5V609.9h7.8a6.4 6.4 0 0 1 0 12.8h-7.8"/>
  <circle cx="1105.3" cy="622.8" r="6.8"/>
  <path d="M1112.8 614.2V631.5"/>
  <path d="M1130.4 617.6A6.6 6.6 0 1 0 1130.4 628"/>
  <path d="M1135.5 606.9V631.5M1146.5 614.5l-9.5 8.3 9.5 8.7"/>
  <path d="M1152.6 610V631.5M1147.2 616.2H1158"/>
  <path d="M1159.8 614.8l9.5 7.9-9.5 8.6"/>
 </g>
 <rect x="1080" y="634.4" width="90" height="2" fill="#e88080"/>
</svg>

</body></html>
